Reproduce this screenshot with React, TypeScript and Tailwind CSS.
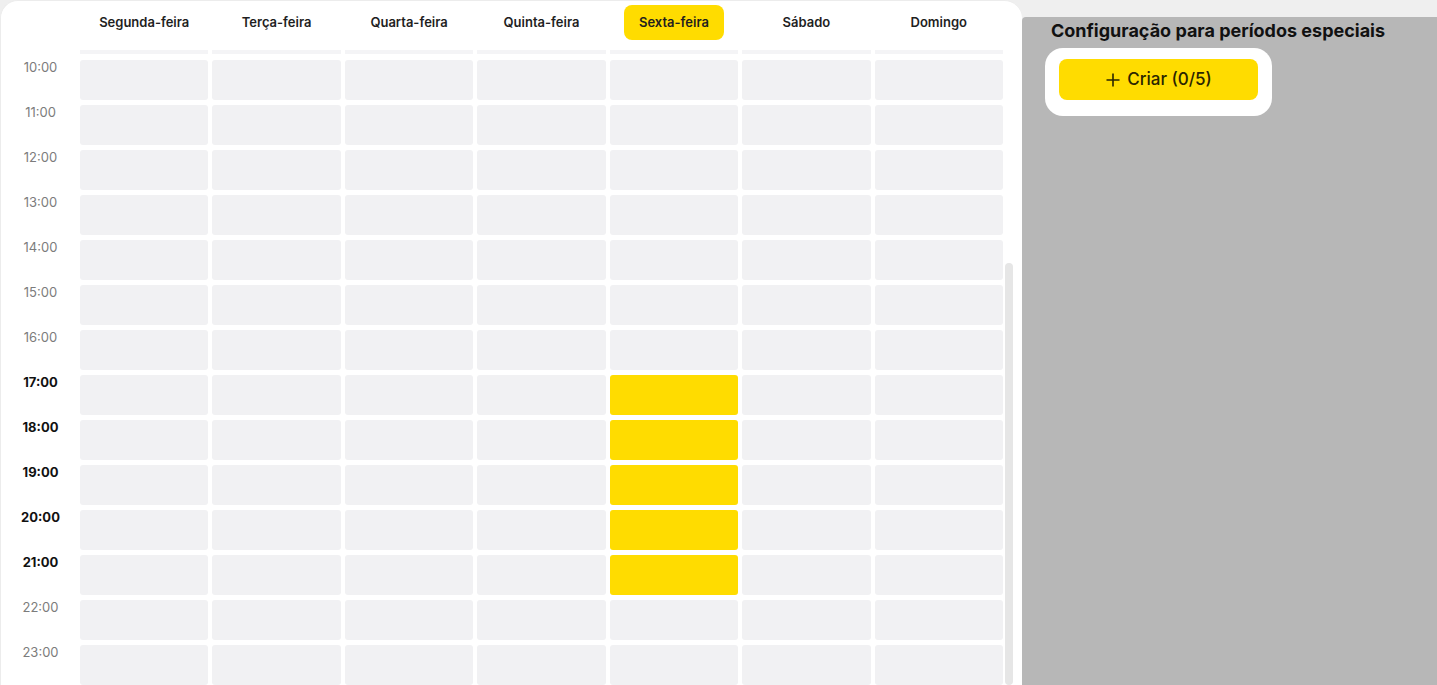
import React from 'react';

const days = ['Segunda-feira', 'Terça-feira', 'Quarta-feira', 'Quinta-feira', 'Sexta-feira', 'Sábado', 'Domingo'];
const hours = ['10:00', '11:00', '12:00', '13:00', '14:00', '15:00', '16:00', '17:00', '18:00', '19:00', '20:00', '21:00', '22:00', '23:00'];

// selected slots: day index -> hours
const selected: Record<number, string[]> = {
  4: ['17:00', '18:00', '19:00', '20:00', '21:00'],
};
const activeDay = 4;

const isSelected = (day: number, hour: string) => (selected[day] ?? []).includes(hour);
const hourActive = (hour: string) => Object.values(selected).some(list => list.includes(hour));

function Schedule() {
  return (
    <div className="flex h-full w-[1022px] shrink-0 overflow-hidden rounded-t-[18px] border-l border-t border-[#ececec] bg-white">
      <div className="flex w-[1002px] shrink-0 flex-col">
        {/* weekday header */}
        <div className="grid h-[52px] grid-cols-[75px_repeat(7,1fr)] gap-x-[4px] pt-[4px]">
          <div />
          {days.map((d, i) => (
            <div key={d} className="flex justify-center">
              <span
                className={`flex h-[35px] items-center rounded-[8px] px-[15px] text-[13px] font-semibold text-[#1f1f1f] ${
                  i === activeDay ? 'bg-[#ffdc00]' : ''
                }`}
              >
                {d}
              </span>
            </div>
          ))}
        </div>

        {/* tail of the row above, scrolled under the header */}
        <div className="grid h-[4px] grid-cols-[75px_repeat(7,1fr)] gap-x-[4px]">
          <div />
          {days.map(d => (
            <div key={d} className="bg-[#f4f4f6]" />
          ))}
        </div>

        <div className="mt-[6px] grid grid-cols-[75px_repeat(7,1fr)] gap-x-[4px] gap-y-[5px]">
          {hours.map(h => (
            <React.Fragment key={h}>
              <div
                className={`pl-[4px] text-center text-[13px] leading-[15px] ${
                  hourActive(h) ? 'font-bold text-[#111]' : 'text-[#7c7c7c]'
                }`}
              >
                {h}
              </div>
              {days.map((d, i) => (
                <div
                  key={d}
                  className={`h-[40px] rounded-[3px] ${isSelected(i, h) ? 'bg-[#ffdc00]' : 'bg-[#f1f1f3]'}`}
                />
              ))}
            </React.Fragment>
          ))}
        </div>
      </div>

      {/* scrollbar */}
      <div className="ml-[2px] w-[8px] pt-[262px]">
        <div className="h-full rounded-full bg-[#e6e6e6]" />
      </div>
    </div>
  );
}

function SpecialPeriods() {
  return (
    <div className="flex h-full flex-1 flex-col pt-[17px]">
      <div className="flex-1 rounded-tl-[4px] bg-[#b7b7b7] pl-[23px] pt-[3px]">
        <h2 className="pl-[6px] text-[18px] font-bold leading-[22px] text-[#111]">
          Configuração para períodos especiais
        </h2>
        <div className="mt-[6px] inline-flex rounded-[18px] bg-white px-[14px] pb-[16px] pt-[11px]">
          <button className="flex h-[41px] w-[199px] items-center justify-center gap-[6px] rounded-[8px] bg-[#ffdc00] text-[17px] font-medium text-[#2a2500]">
            <svg width="16" height="16" viewBox="0 0 16 16" fill="none" stroke="currentColor" strokeWidth="1.6">
              <path d="M8 1.5v13M1.5 8h13" />
            </svg>
            Criar (0/5)
          </button>
        </div>
      </div>
    </div>
  );
}

export default function App() {
  return (
    <div
      className="flex h-[685px] w-[1437px] overflow-hidden bg-[#efefef]"
      style={{ fontFamily: 'Inter, "Noto Sans", sans-serif' }}
    >
      <Schedule />
      <SpecialPeriods />
    </div>
  );
}
